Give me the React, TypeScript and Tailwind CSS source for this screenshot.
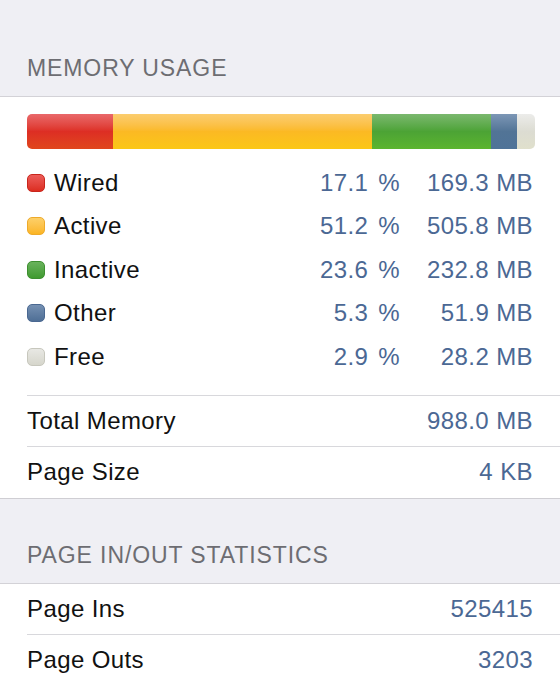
const font = "font-['Helvetica_Neue','Liberation_Sans',Arial,sans-serif]";

type Segment = { name: string; pct: string; mb: string; bar: string; swatch: string; width: number };

const segments: Segment[] = [
  { name: "Wired", pct: "17.1", mb: "169.3 MB", bar: "bg-linear-to-b from-[#e9686a] via-[#dd2e24] to-[#e0461c]", swatch: "bg-linear-to-b from-[#ec5b58] to-[#dc2c1f] border-[#c9261c]", width: 86 },
  { name: "Active", pct: "51.2", mb: "505.8 MB", bar: "bg-linear-to-b from-[#fbcd6e] via-[#fbb923] to-[#fbc715]", swatch: "bg-linear-to-b from-[#fdd068] to-[#fbb520] border-[#eeaa2a]", width: 259 },
  { name: "Inactive", pct: "23.6", mb: "232.8 MB", bar: "bg-linear-to-b from-[#7bb86e] via-[#4ca335] to-[#5cb52e]", swatch: "bg-linear-to-b from-[#69b25c] to-[#3f9a2f] border-[#3d8f30]", width: 119 },
  { name: "Other", pct: "5.3", mb: "51.9 MB", bar: "bg-linear-to-b from-[#7d97b6] via-[#527496] to-[#4f7398]", swatch: "bg-linear-to-b from-[#7590b2] to-[#4f6f96] border-[#4a6891]", width: 26 },
  { name: "Free", pct: "2.9", mb: "28.2 MB", bar: "bg-linear-to-b from-[#ececea] via-[#dcdcd2] to-[#e0e0cc]", swatch: "bg-linear-to-b from-[#e8e8e4] to-[#d6d6cc] border-[#c7c7bd]", width: 18 },
];

function SectionHeader({ title, h }: { title: string; h: string }) {
  return (
    <div className={`${h} flex items-end px-[27px] pb-[14px] border-b border-[#d3d2d7]`}>
      <span className="text-[23px] leading-[28px] tracking-[0.9px] text-[#6d6d72]">{title}</span>
    </div>
  );
}

function InfoRow({ label, value, last }: { label: string; value: string; last?: boolean }) {
  return (
    <div className={`ml-[27px] pr-[27px] h-[51px] flex items-center justify-between text-[24px] tracking-[0.4px] ${last ? "" : "border-b border-[#d8d8dc]"}`}>
      <span className="text-[#111]">{label}</span>
      <span className="text-[#4b6894]">{value}</span>
    </div>
  );
}

export default function App() {
  return (
    <div className={`min-h-screen bg-[#efeff4] ${font}`}>
      <SectionHeader title="MEMORY USAGE" h="h-[97px]" />
      <div className="bg-white border-b border-[#cfced3]">
        <div className="pt-[17px] ml-[27px] mr-[25px]">
          <div className="flex h-[35px] rounded-[5px] overflow-hidden">
            {segments.map((s) => (
              <div key={s.name} className={`${s.bar} h-full`} style={{ width: s.width }} />
            ))}
          </div>
        </div>
        <div className="pt-[12px] pb-[16px]">
          {segments.map((s) => (
            <div key={s.name} className="h-[43.5px] flex items-center pl-[27px] pr-[27px] text-[24px] tracking-[0.4px]">
              <span className={`w-[18px] h-[18px] rounded-[5px] border ${s.swatch}`} />
              <span className="ml-[9px] flex-1 text-[#111]">{s.name}</span>
              <span className="text-[#4b6894]">{s.pct}</span>
              <span className="ml-[10px] text-[#4b6894]">%</span>
              <span className="w-[133px] text-[#4b6894] text-right">{s.mb}</span>
            </div>
          ))}
        </div>
        <div className="border-t border-[#d8d8dc] ml-[27px]" />
        <InfoRow label="Total Memory" value="988.0 MB" />
        <InfoRow label="Page Size" value="4 KB" last />
      </div>
      <SectionHeader title="PAGE IN/OUT STATISTICS" h="h-[85px]" />
      <div className="bg-white">
        <InfoRow label="Page Ins" value="525415" />
        <InfoRow label="Page Outs" value="3203" last />
      </div>
    </div>
  );
}
